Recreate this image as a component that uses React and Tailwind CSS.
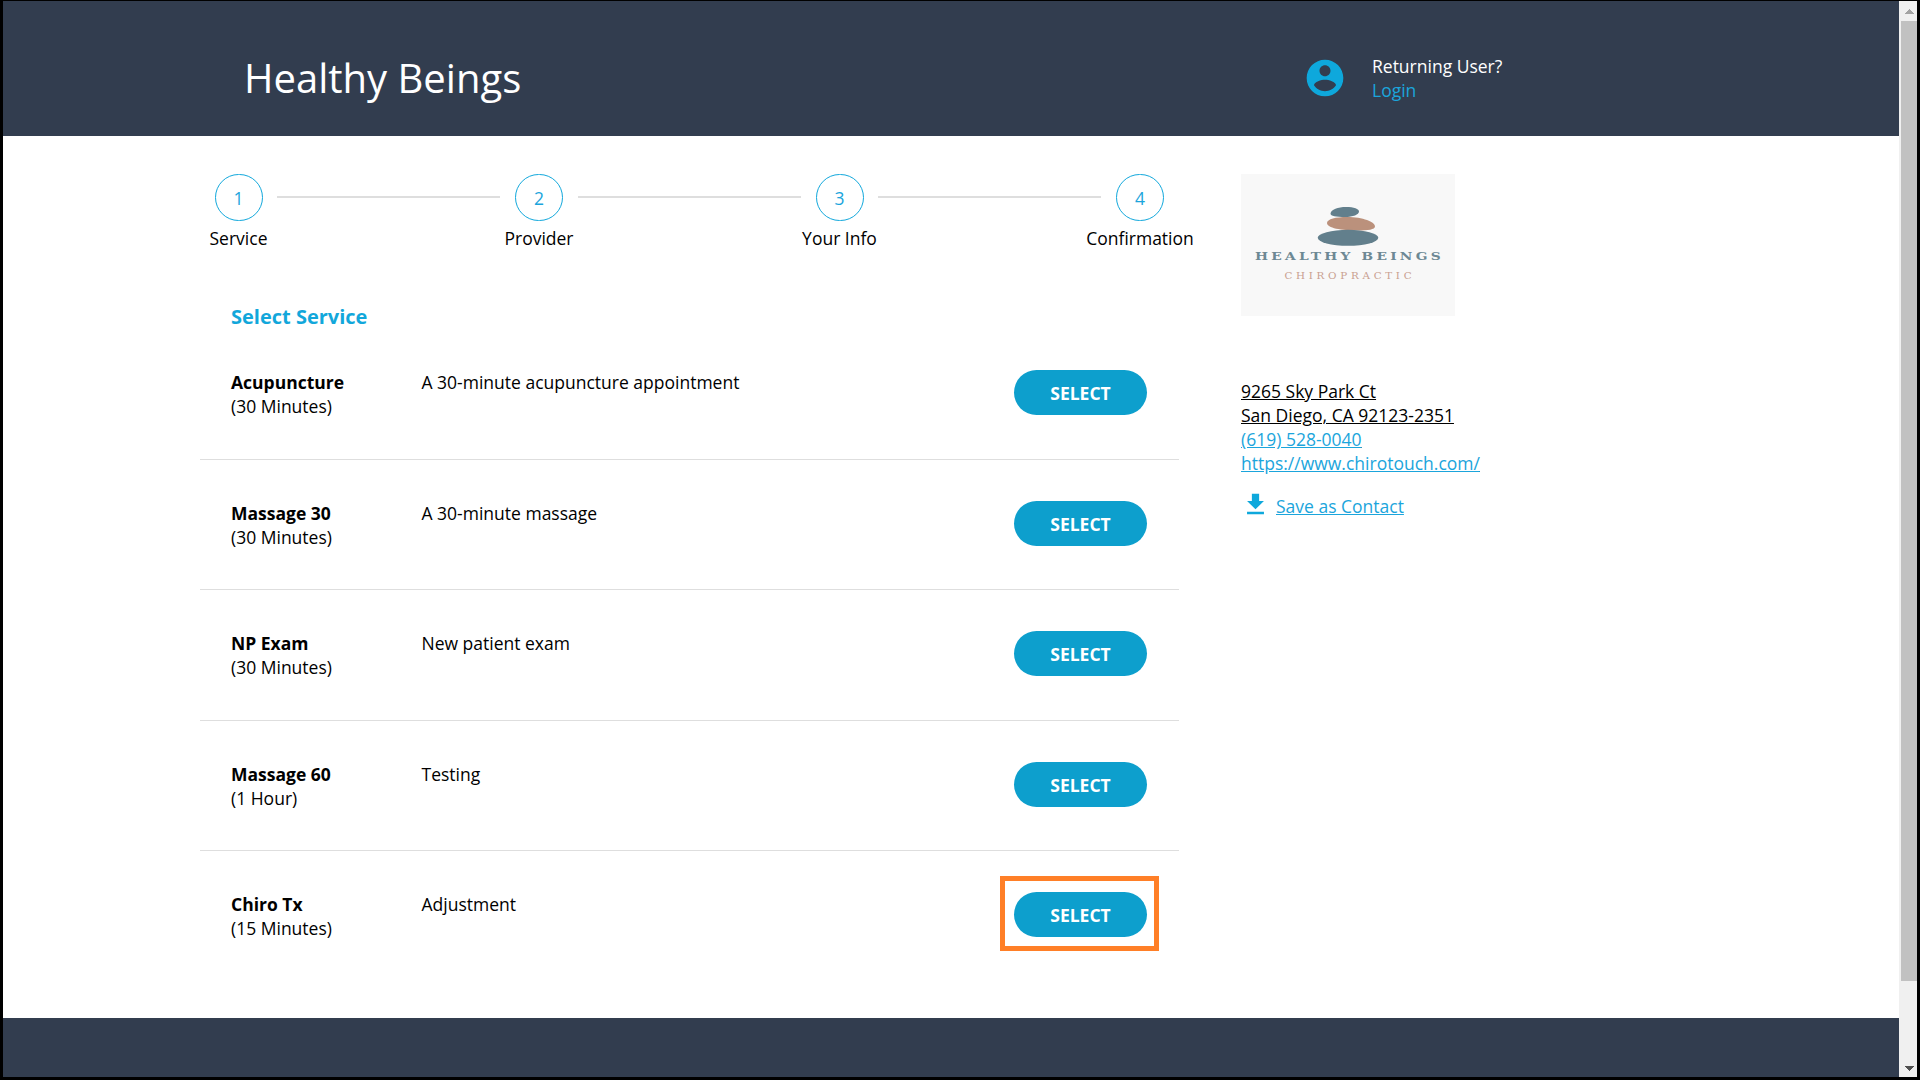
const steps = ["Service", "Provider", "Your Info", "Confirmation"];

const services = [
  { name: "Acupuncture", length: "(30 Minutes)", text: "A 30-minute acupuncture appointment" },
  { name: "Massage 30", length: "(30 Minutes)", text: "A 30-minute massage" },
  { name: "NP Exam", length: "(30 Minutes)", text: "New patient exam" },
  { name: "Massage 60", length: "(1 Hour)", text: "Testing" },
  { name: "Chiro Tx", length: "(15 Minutes)", text: "Adjustment", highlighted: true },
];

function Header() {
  return (
    <header className="flex h-[135px] shrink-0 items-start bg-[#323d4f] text-white">
      <h1 className="ml-[241px] mt-[50px] w-[1059px] text-[40px] leading-[54px]">Healthy Beings</h1>
      <svg className="mt-[54.5px] size-[44px] shrink-0 fill-[#0ea8dc]" viewBox="0 0 24 24">
        <path d="M12 2C6.48 2 2 6.48 2 12s4.48 10 10 10 10-4.48 10-10S17.52 2 12 2zm0 3c1.66 0 3 1.34 3 3s-1.34 3-3 3-3-1.34-3-3 1.34-3 3-3zm0 14.2c-2.5 0-4.71-1.28-6-3.22.03-1.99 4-3.08 6-3.08 1.99 0 5.97 1.09 6 3.08-1.29 1.94-3.5 3.22-6 3.22z" />
      </svg>
      <div className="ml-[25px] mt-[53px]">
        <p>Returning User?</p>
        <a className="block text-[#1ba5dc]">Login</a>
      </div>
    </header>
  );
}

function Stepper() {
  return (
    <ol className="flex">
      {steps.map((label, i) => (
        <li key={label} className={i < 3 ? "flex w-[300.5px]" : "flex"}>
          <div className="flex w-[77px] shrink-0 flex-col items-center">
            <span className="flex h-[47px] w-[48px] shrink-0 items-center justify-center rounded-full border border-[#12a8dc] pt-px text-[#1ba5dc]">
              {i + 1}
            </span>
            <span className="mt-[5px] whitespace-nowrap">{label}</span>
          </div>
          {i < 3 && <span className="mt-[22px] h-[2px] w-[223px] bg-[#dedede]" />}
        </li>
      ))}
    </ol>
  );
}

function SelectButton({ highlighted }) {
  return (
    <div className="relative h-[45px] w-[133px]">
      <button className="flex h-[45px] w-[133px] items-center justify-center rounded-full bg-[#0d9fcd] pt-px font-bold text-white">
        SELECT
      </button>
      {highlighted && <span className="absolute -left-[14px] -top-[16px] h-[75px] w-[159px] border-[5px] border-[#ff7f27]" />}
    </div>
  );
}

function ServiceRow({ service }) {
  return (
    <li className="flex h-[130.5px] items-start border-b border-[#dedede] pl-[31px] pr-[32px] pt-[41px] last:border-b-0">
      <div className="w-[190.5px]">
        <p className="font-bold">{service.name}</p>
        <p>{service.length}</p>
      </div>
      <p className="flex-1">{service.text}</p>
      <SelectButton highlighted={service.highlighted} />
    </li>
  );
}

function ClinicLogo() {
  return (
    <svg className="h-[142px] w-[214px] bg-[#f8f8f8]" viewBox="0 0 214 142">
      <path d="M89.500 39.500C90 35.500 97 33 105 33c8 0 13 1.800 13 4.500 0 3-6 5.500-14 5.500-9 0-14.500-.8-14.500-3.500z" fill="#627f8c" />
      <path d="M86 49c0-4 9-6 20-6 16 0 28 5 28 9.500 0 3-7 4-17 4-17 0-31-2.500-31-7.500z" fill="#bb917c" />
      <ellipse cx="107" cy="63.800" rx="30.300" ry="8" fill="#627f8c" />
      <g transform="translate(14 86.300) scale(1.250 1)">
        <text fontSize="11" fontWeight="bold" textLength="148.500" lengthAdjust="spacing" fill="#6d8894" fontFamily="'DejaVu Serif', serif">HEALTHY BEINGS</text>
      </g>
      <g transform="translate(43.500 105) scale(1.150 1)">
        <text fontSize="9" textLength="110.500" lengthAdjust="spacing" fill="#c9a090" fontFamily="'DejaVu Serif', serif">CHIROPRACTIC</text>
      </g>
    </svg>
  );
}

function ClinicInfo() {
  return (
    <aside className="mt-[38px] ml-[62px] flex flex-col items-start">
      <ClinicLogo />
      <address className="mt-[63px] not-italic underline">
        <p>9265 Sky Park Ct</p>
        <p>San Diego, CA 92123-2351</p>
        <a className="block text-[#1ba5dc]">(619) 528-0040</a>
        <a className="block text-[#1ba5dc]">https://www.chirotouch.com/</a>
      </address>
      <div className="mt-[15px] flex text-[#1ba5dc]">
        <svg className="h-[29px] w-[29px] fill-[#0ea8dc]" viewBox="0 0 24 24">
          <path d="M19 9h-4V3H9v6H5l7 7 7-7zM5 18v2h14v-2H5z" />
        </svg>
        <a className="ml-[6px] mt-[4px] underline">Save as Contact</a>
      </div>
    </aside>
  );
}

function ScrollBar() {
  return (
    <div className="flex w-[18px] shrink-0 flex-col items-end bg-[#f0f0f0]">
      <div className="flex h-[20px] w-[16px] items-center justify-center">
        <svg className="h-[5px] w-[9px] fill-[#a3a3a3]" viewBox="0 0 9 5" shapeRendering="crispEdges">
          <path d="M4.500 0L9 5H0z" />
        </svg>
      </div>
      <div className="h-[960px] w-[16px] bg-[#c1c1c1]" />
      <div className="mt-auto flex h-[17px] w-[16px] items-center justify-center">
        <svg className="h-[5px] w-[9px] fill-[#505050]" viewBox="0 0 9 5" shapeRendering="crispEdges">
          <path d="M0 0h9L4.500 5z" />
        </svg>
      </div>
    </div>
  );
}

export default function App() {
  return (
    <div className="flex h-[1080px] w-[1920px] overflow-hidden border-x-[3px] border-b-[3px] border-t border-black bg-white font-['Open_Sans',sans-serif] text-[17.5px] leading-[24px] text-black">
      <div className="flex flex-1 flex-col">
        <Header />
        <main className="flex flex-1 pl-[197px]">
          <section className="w-[979px] pt-[38px]">
            <Stepper />
            <h2 className="ml-[31px] mt-[53px] text-[20px] font-bold leading-[28px] text-[#12a7db]">Select Service</h2>
            <ul className="mt-[-2px]">
              {services.map((service) => (
                <ServiceRow key={service.name} service={service} />
              ))}
            </ul>
          </section>
          <ClinicInfo />
        </main>
        <footer className="h-[59px] shrink-0 bg-[#323d4f]" />
      </div>
      <ScrollBar />
    </div>
  );
}
